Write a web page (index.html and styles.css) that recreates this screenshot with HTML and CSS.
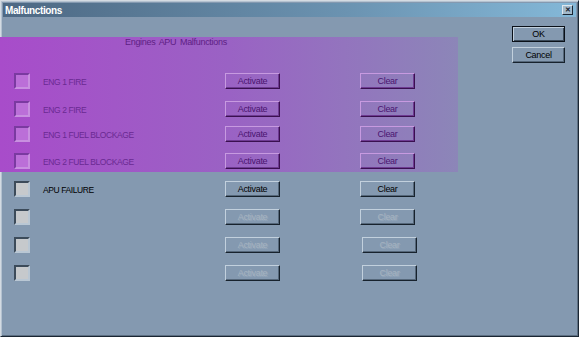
FILE: index.html
```html
<!DOCTYPE html>
<html lang="en">
<head>
    <meta charset="UTF-8">
    <title>Malfunctions</title>
    <link rel="stylesheet" href="styles.css">
</head>
<body>
    <div class="window">
        <div class="titlebar">
            <span class="title">Malfunctions</span>
            <span class="close-btn">&#x2715;</span>
        </div>
        <div class="client">
            <div class="main">
                <div class="zone">
                    <div class="heading">Engines APU Malfunctions</div>
                    <div class="rows rows-top">
                        <div class="row">
                            <span class="check"></span>
                            <span class="label">ENG 1 FIRE</span>
                            <button class="btn">Activate</button>
                            <button class="btn">Clear</button>
                        </div>
                        <div class="row">
                            <span class="check"></span>
                            <span class="label">ENG 2 FIRE</span>
                            <button class="btn">Activate</button>
                            <button class="btn">Clear</button>
                        </div>
                        <div class="row">
                            <span class="check"></span>
                            <span class="label">ENG 1 FUEL BLOCKAGE</span>
                            <button class="btn">Activate</button>
                            <button class="btn">Clear</button>
                        </div>
                        <div class="row">
                            <span class="check"></span>
                            <span class="label">ENG 2 FUEL BLOCKAGE</span>
                            <button class="btn">Activate</button>
                            <button class="btn">Clear</button>
                        </div>
                    </div>
                </div>
                <div class="rows rows-bottom">
                    <div class="row">
                        <span class="check"></span>
                        <span class="label">APU FAILURE</span>
                        <button class="btn">Activate</button>
                        <button class="btn">Clear</button>
                    </div>
                    <div class="row">
                        <span class="check"></span>
                        <span class="label"></span>
                        <button class="btn" disabled>Activate</button>
                        <button class="btn" disabled>Clear</button>
                    </div>
                    <div class="row shifted">
                        <span class="check"></span>
                        <span class="label"></span>
                        <button class="btn" disabled>Activate</button>
                        <button class="btn" disabled>Clear</button>
                    </div>
                    <div class="row shifted">
                        <span class="check"></span>
                        <span class="label"></span>
                        <button class="btn" disabled>Activate</button>
                        <button class="btn" disabled>Clear</button>
                    </div>
                </div>
            </div>
            <div class="side">
                <button class="btn btn-default">OK</button>
                <button class="btn">Cancel</button>
            </div>
        </div>
    </div>
</body>
</html>
```

FILE: styles.css
```css
body {
    margin: 0;
    padding: 0;
    background-color: #ffffff;
    font-family: "Liberation Sans", Arial, sans-serif;
}
.window {
    width: 579px;
    height: 337px;
    box-sizing: border-box;
    background-color: #8499b0;
    border: 1px solid;
    border-color: #d4dbe2 #1a2633 #1a2633 #d4dbe2;
    box-shadow: inset 1px 1px 0 #b4c2d0, inset -1px -1px 0 #5d6f82;
    padding: 2px;
    display: flex;
    flex-direction: column;
}
.titlebar {
    height: 14px;
    display: flex;
    align-items: center;
    justify-content: space-between;
    padding: 0 2px 0 2px;
    background: linear-gradient(to right, #4d6883, #6b93b1 60%, #84b8d8);
}
.title {
    color: white;
    font-weight: bold;
    font-size: 10px;
    letter-spacing: -0.4px;
}
.close-btn {
    width: 11px;
    height: 10px;
    box-sizing: border-box;
    font-size: 7px;
    font-weight: bold;
    line-height: 8px;
    text-align: center;
    color: #1c2630;
    background-color: #a3bacb;
    border: 1px solid;
    border-color: #e0e8ef #1a2633 #1a2633 #e0e8ef;
    margin-right: 1px;
}
.client {
    flex: 1;
    display: flex;
}
.main {
    flex: 1;
}

/* highlighted group */
.zone {
    width: 458px;
    margin: 23px 0 0 -3px;
    padding: 0 0 3px 3px;
    box-sizing: border-box;
    background: linear-gradient(to right, #a84cca, #9a62c4 50%, #8c86b8);
}
.heading {
    margin: -3px 0 0 122px;
    font-size: 9px;
    line-height: 10px;
    color: #5e2184;
    letter-spacing: -0.3px;
    word-spacing: 1.5px;
}
.rows {
    display: grid;
}
.rows-top {
    margin-top: 26px;
    grid-template-rows: 28px 25px 27px 16px;
}
.rows-bottom {
    margin-top: 9px;
    grid-template-rows: 28px 28px 28px 16px;
}
.row {
    display: grid;
    grid-template-columns: 29px 182px 135px 55px;
    align-items: start;
    padding-left: 11px;
}
.row.shifted {
    grid-template-columns: 29px 182px 137px 55px;
}
.check {
    width: 16px;
    height: 16px;
    box-sizing: border-box;
    background-color: #c6c9cc;
    border: 2px solid;
    border-color: #3c4b5a #b9c7d4 #b9c7d4 #3c4b5a;
}
.label {
    font-size: 8.5px;
    line-height: 16px;
    color: #000000;
    letter-spacing: -0.4px;
    padding-top: 1px;
}
.btn {
    width: 55px;
    height: 16px;
    padding: 0;
    box-sizing: border-box;
    font-family: inherit;
    font-size: 9px;
    letter-spacing: -0.3px;
    color: #000000;
    background-color: #8499b0;
    border: 1px solid;
    border-color: #c2d0dd #17222d #17222d #c2d0dd;
    box-shadow: inset -1px -1px 0 #55677a;
}
.btn:disabled {
    color: #a6b3c0;
    text-shadow: 1px 1px 0 #93a6ba;
}
.zone .label {
    color: #6a2a92;
}
.zone .btn {
    color: #4a1470;
    background-color: transparent;
    border-color: #c79ae0 #3a1050 #3a1050 #c79ae0;
    box-shadow: inset -1px -1px 0 #6e3a92;
}
.zone .check {
    background-color: #bb6fd8;
    border-color: #7a3aa0 #c890e0 #c890e0 #7a3aa0;
}
.side {
    width: 64px;
    padding-top: 9px;
    display: flex;
    flex-direction: column;
    gap: 5px;
}
.side .btn {
    width: 53px;
    height: 16px;
}
.btn-default {
    border: 1px solid #0a1018;
    box-shadow: inset 1px 1px 0 #c2d0dd, inset -1px -1px 0 #3b4a5a;
}
```
